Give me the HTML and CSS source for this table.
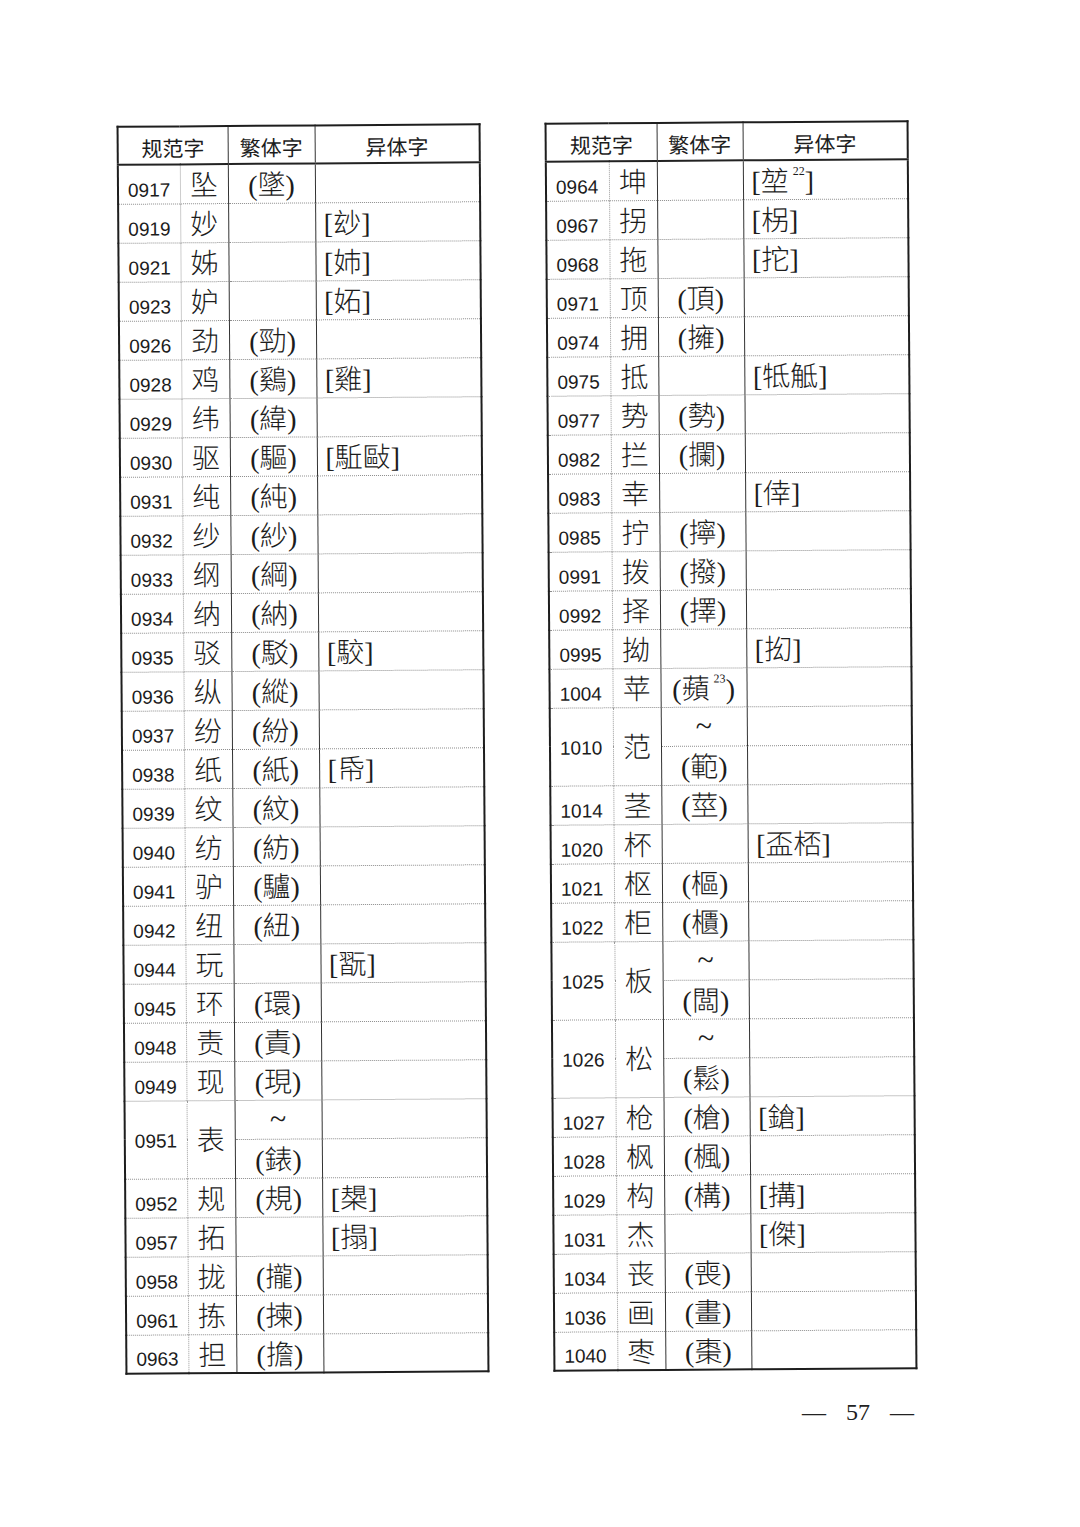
FILE: index.html
```html
<!DOCTYPE html>
<html lang="zh-CN">
<head>
<meta charset="utf-8">
<title>57</title>
<link rel="stylesheet" href="styles.css">
</head>
<body>
<div class="page">
  <div class="tables">
    <table class="tbl tbl-left">
      <colgroup><col class="c-num"><col class="c-ch"><col class="c-tr"><col class="c-va"></colgroup>
      <thead><tr><th colspan="2">规范字</th><th>繁体字</th><th>异体字</th></tr></thead>
      <tbody>
        <tr><td class="num">0917</td><td class="ch">坠</td><td class="tr">(墜)</td><td class="va"></td></tr>
        <tr><td class="num">0919</td><td class="ch">妙</td><td class="tr"></td><td class="va">[玅]</td></tr>
        <tr><td class="num">0921</td><td class="ch">姊</td><td class="tr"></td><td class="va">[姉]</td></tr>
        <tr><td class="num">0923</td><td class="ch">妒</td><td class="tr"></td><td class="va">[妬]</td></tr>
        <tr><td class="num">0926</td><td class="ch">劲</td><td class="tr">(勁)</td><td class="va"></td></tr>
        <tr><td class="num">0928</td><td class="ch">鸡</td><td class="tr">(鷄)</td><td class="va">[雞]</td></tr>
        <tr><td class="num">0929</td><td class="ch">纬</td><td class="tr">(緯)</td><td class="va"></td></tr>
        <tr><td class="num">0930</td><td class="ch">驱</td><td class="tr">(驅)</td><td class="va">[駈敺]</td></tr>
        <tr><td class="num">0931</td><td class="ch">纯</td><td class="tr">(純)</td><td class="va"></td></tr>
        <tr><td class="num">0932</td><td class="ch">纱</td><td class="tr">(紗)</td><td class="va"></td></tr>
        <tr><td class="num">0933</td><td class="ch">纲</td><td class="tr">(綱)</td><td class="va"></td></tr>
        <tr><td class="num">0934</td><td class="ch">纳</td><td class="tr">(納)</td><td class="va"></td></tr>
        <tr><td class="num">0935</td><td class="ch">驳</td><td class="tr">(駁)</td><td class="va">[駮]</td></tr>
        <tr><td class="num">0936</td><td class="ch">纵</td><td class="tr">(縱)</td><td class="va"></td></tr>
        <tr><td class="num">0937</td><td class="ch">纷</td><td class="tr">(紛)</td><td class="va"></td></tr>
        <tr><td class="num">0938</td><td class="ch">纸</td><td class="tr">(紙)</td><td class="va">[帋]</td></tr>
        <tr><td class="num">0939</td><td class="ch">纹</td><td class="tr">(紋)</td><td class="va"></td></tr>
        <tr><td class="num">0940</td><td class="ch">纺</td><td class="tr">(紡)</td><td class="va"></td></tr>
        <tr><td class="num">0941</td><td class="ch">驴</td><td class="tr">(驢)</td><td class="va"></td></tr>
        <tr><td class="num">0942</td><td class="ch">纽</td><td class="tr">(紐)</td><td class="va"></td></tr>
        <tr><td class="num">0944</td><td class="ch">玩</td><td class="tr"></td><td class="va">[翫]</td></tr>
        <tr><td class="num">0945</td><td class="ch">环</td><td class="tr">(環)</td><td class="va"></td></tr>
        <tr><td class="num">0948</td><td class="ch">责</td><td class="tr">(責)</td><td class="va"></td></tr>
        <tr><td class="num">0949</td><td class="ch">现</td><td class="tr">(現)</td><td class="va"></td></tr>
        <tr><td class="num dbl" rowspan="2">0951</td><td class="ch dbl" rowspan="2">表</td><td class="tr tilde">~</td><td class="va"></td></tr>
        <tr><td class="tr">(錶)</td><td class="va"></td></tr>
        <tr><td class="num">0952</td><td class="ch">规</td><td class="tr">(規)</td><td class="va">[槼]</td></tr>
        <tr><td class="num">0957</td><td class="ch">拓</td><td class="tr"></td><td class="va">[搨]</td></tr>
        <tr><td class="num">0958</td><td class="ch">拢</td><td class="tr">(攏)</td><td class="va"></td></tr>
        <tr><td class="num">0961</td><td class="ch">拣</td><td class="tr">(揀)</td><td class="va"></td></tr>
        <tr><td class="num">0963</td><td class="ch">担</td><td class="tr">(擔)</td><td class="va"></td></tr>
      </tbody>
    </table>

    <table class="tbl tbl-right">
      <colgroup><col class="c-num2"><col class="c-ch"><col class="c-tr2"><col class="c-va"></colgroup>
      <thead><tr><th colspan="2">规范字</th><th>繁体字</th><th>异体字</th></tr></thead>
      <tbody>
        <tr><td class="num">0964</td><td class="ch">坤</td><td class="tr"></td><td class="va">[堃<sup class="note">22</sup>]</td></tr>
        <tr><td class="num">0967</td><td class="ch">拐</td><td class="tr"></td><td class="va">[柺]</td></tr>
        <tr><td class="num">0968</td><td class="ch">拖</td><td class="tr"></td><td class="va">[拕]</td></tr>
        <tr><td class="num">0971</td><td class="ch">顶</td><td class="tr">(頂)</td><td class="va"></td></tr>
        <tr><td class="num">0974</td><td class="ch">拥</td><td class="tr">(擁)</td><td class="va"></td></tr>
        <tr><td class="num">0975</td><td class="ch">抵</td><td class="tr"></td><td class="va">[牴觝]</td></tr>
        <tr><td class="num">0977</td><td class="ch">势</td><td class="tr">(勢)</td><td class="va"></td></tr>
        <tr><td class="num">0982</td><td class="ch">拦</td><td class="tr">(攔)</td><td class="va"></td></tr>
        <tr><td class="num">0983</td><td class="ch">幸</td><td class="tr"></td><td class="va">[倖]</td></tr>
        <tr><td class="num">0985</td><td class="ch">拧</td><td class="tr">(擰)</td><td class="va"></td></tr>
        <tr><td class="num">0991</td><td class="ch">拨</td><td class="tr">(撥)</td><td class="va"></td></tr>
        <tr><td class="num">0992</td><td class="ch">择</td><td class="tr">(擇)</td><td class="va"></td></tr>
        <tr><td class="num">0995</td><td class="ch">拗</td><td class="tr"></td><td class="va">[抝]</td></tr>
        <tr><td class="num">1004</td><td class="ch">苹</td><td class="tr">(蘋<sup class="note">23</sup>)</td><td class="va"></td></tr>
        <tr><td class="num dbl" rowspan="2">1010</td><td class="ch dbl" rowspan="2">范</td><td class="tr tilde">~</td><td class="va"></td></tr>
        <tr><td class="tr">(範)</td><td class="va"></td></tr>
        <tr><td class="num">1014</td><td class="ch">茎</td><td class="tr">(莖)</td><td class="va"></td></tr>
        <tr><td class="num">1020</td><td class="ch">杯</td><td class="tr"></td><td class="va">[盃桮]</td></tr>
        <tr><td class="num">1021</td><td class="ch">枢</td><td class="tr">(樞)</td><td class="va"></td></tr>
        <tr><td class="num">1022</td><td class="ch">柜</td><td class="tr">(櫃)</td><td class="va"></td></tr>
        <tr><td class="num dbl" rowspan="2">1025</td><td class="ch dbl" rowspan="2">板</td><td class="tr tilde">~</td><td class="va"></td></tr>
        <tr><td class="tr">(闆)</td><td class="va"></td></tr>
        <tr><td class="num dbl" rowspan="2">1026</td><td class="ch dbl" rowspan="2">松</td><td class="tr tilde">~</td><td class="va"></td></tr>
        <tr><td class="tr">(鬆)</td><td class="va"></td></tr>
        <tr><td class="num">1027</td><td class="ch">枪</td><td class="tr">(槍)</td><td class="va">[鎗]</td></tr>
        <tr><td class="num">1028</td><td class="ch">枫</td><td class="tr">(楓)</td><td class="va"></td></tr>
        <tr><td class="num">1029</td><td class="ch">构</td><td class="tr">(構)</td><td class="va">[搆]</td></tr>
        <tr><td class="num">1031</td><td class="ch">杰</td><td class="tr"></td><td class="va">[傑]</td></tr>
        <tr><td class="num">1034</td><td class="ch">丧</td><td class="tr">(喪)</td><td class="va"></td></tr>
        <tr><td class="num">1036</td><td class="ch">画</td><td class="tr">(畫)</td><td class="va"></td></tr>
        <tr><td class="num">1040</td><td class="ch">枣</td><td class="tr">(棗)</td><td class="va"></td></tr>
      </tbody>
    </table>
  </div>

  <div class="folio"><span class="dash">—</span><span class="pg">57</span><span class="dash">—</span></div>
</div>
</body>
</html>
```

FILE: styles.css
```css
html, body {
  margin: 0;
  padding: 0;
  background: #ffffff;
}
body {
  width: 1080px;
  height: 1527px;
  overflow: hidden;
  color: #1c1c1c;
}
.page {
  padding-top: 123px;
}
.tables {
  display: flex;
  align-items: flex-start;
  gap: 64px;
  padding-left: 121px;
  transform: rotate(-0.41deg);
  transform-origin: 516px 625px;
}
.tbl {
  border-collapse: collapse;
  table-layout: fixed;
  width: 362px;
  border: 2px solid #1e1e1e;
}
.tbl thead tr { height: 38px; }
.tbl tbody tr { height: 39px; }
.c-num { width: 62px; }
.c-num2 { width: 63px; }
.c-ch { width: 48px; }
.c-tr { width: 87px; }
.c-tr2 { width: 86px; }
.c-va { width: 165px; }

.tbl th {
  padding: 3px 0 0 0;
  font-family: "Noto Sans CJK SC", sans-serif;
  font-weight: 400;
  font-size: 21px;
  line-height: 22px;
  text-align: center;
  vertical-align: middle;
  border-bottom: 2px solid #222;
  border-left: 1.5px solid #333;
}
.tbl td {
  padding: 0;
  border-top: 1px dotted #8c8c8c;
  font-family: "Liberation Serif", "Noto Sans CJK SC", serif;
  font-size: 28px;
  line-height: 20px;
  font-weight: 300;
  vertical-align: middle;
  white-space: nowrap;
}
.tbl td.num {
  font-family: "Liberation Sans", Arial, sans-serif;
  font-size: 19px;
  font-weight: 400;
  line-height: 19px;
  vertical-align: bottom;
  padding: 0 0 4px 9px;
  border-right: 1px dotted #9a9a9a;
}
.tbl td.num.dbl {
  vertical-align: middle;
  padding-bottom: 0;
  padding-top: 2px;
}
.tbl td.ch {
  text-align: center;
  padding-top: 5px;
}
.tbl td.ch.dbl {
  padding-top: 3px;
}
.tbl td.tr {
  text-align: center;
  padding-top: 5px;
  border-left: 1.5px solid #333;
}
.tbl td.tilde {
  font-size: 30px;
  vertical-align: top;
  padding-top: 8px;
}
.tbl td.va {
  text-align: left;
  padding-left: 8px;
  padding-top: 5px;
  border-left: 1.5px solid #333;
}
.note {
  font-family: "Liberation Serif", serif;
  font-size: 12px;
  line-height: 12px;
  vertical-align: top;
  margin-left: 4px;
  position: relative;
  top: -7px;
}
.folio {
  display: flex;
  justify-content: flex-end;
  align-items: baseline;
  gap: 20px;
  padding-right: 166px;
  margin-top: 26px;
  font-family: "Liberation Serif", serif;
  font-size: 24px;
  line-height: 28px;
  color: #222;
}
```
